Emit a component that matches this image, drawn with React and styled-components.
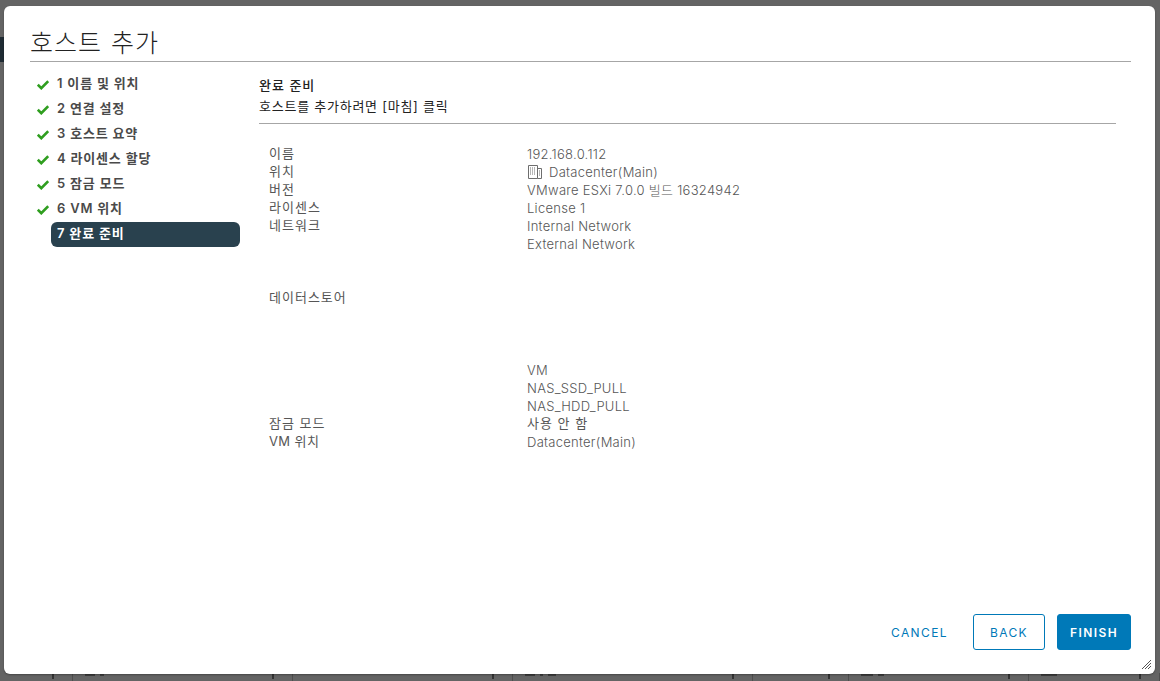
import React from "react";
import styled, { createGlobalStyle } from "styled-components";

const Global = createGlobalStyle`
  html, body { margin: 0; padding: 0; height: 100%; }
  body { overflow: hidden; background: #666; font-family: Inter, "Noto Sans CJK KR", "Liberation Sans", sans-serif; }
  #root { height: 681px; }
`;

const Backdrop = styled.div`
  position: relative;
  width: 1160px;
  height: 681px;
  background: #646464;
  overflow: hidden;
  display: flex;
  flex-direction: column;
  justify-content: space-between;
`;

const TopBand = styled.div`
  height: 62px;
  box-sizing: border-box;
  padding-top: 37px;
  flex: none;
`;

const DarkBlock = styled.div`
  width: 5px;
  height: 25px;
  background: #1f2b33;
`;

const BottomRow = styled.div`
  display: flex;
  height: 8px;
  flex: none;
`;

const BottomCell = styled.div`
  position: relative;
  flex: none;
  width: ${(p) => p.$width}px;
  box-sizing: border-box;
  border-right: 1px solid #4e4e4e;
  display: flex;
  gap: 5px;
  padding: 1px 0 0 ${(p) => p.$pad || 12}px;
`;

const Tick = styled.span`
  position: absolute;
  right: 18px;
  top: 1px;
  width: 2px;
  height: 5px;
  background: #333;
`;

const Stub = styled.span`
  width: ${(p) => p.$w}px;
  height: 2px;
  background: #3d3d3d;
`;

const Modal = styled.section`
  position: absolute;
  left: 4px;
  top: 6px;
  width: 1151px;
  height: 668px;
  background: #fff;
  border-radius: 6px;
  box-shadow: 0 1px 2px rgba(0, 0, 0, 0.3);
  display: flex;
  flex-direction: column;
  padding: 0 24px 24px 26px;
  box-sizing: border-box;
`;

const Header = styled.header`
  height: 55px;
  border-bottom: 1px solid #a6a6a6;
  display: flex;
  align-items: flex-end;
  flex: none;
`;

const Title = styled.h1`
  margin: 0 0 2px;
  font-size: 25px;
  line-height: 32px;
  font-weight: 300;
  letter-spacing: 1px;
  word-spacing: 1px;
  color: #222;
`;

const Body = styled.div`
  flex: 1;
  display: flex;
  min-height: 0;
`;

const Steps = styled.ol`
  list-style: none;
  margin: 0;
  padding: 10px 19px 0 7px;
  width: 229px;
  box-sizing: border-box;
  flex: none;
  display: flex;
  flex-direction: column;
`;

const Step = styled.li`
  display: flex;
  align-items: center;
  height: 25px;
  font-size: 13px;
  font-weight: 600;
`;

const StepIcon = styled.span`
  width: 14px;
  display: flex;
  flex: none;
`;

const StepLabel = styled.span`
  flex: 1;
  height: 25px;
  line-height: 22px;
  padding-left: 6px;
  border-radius: 6px;
  box-sizing: border-box;
  letter-spacing: 0.8px;
  color: ${(p) => (p.$active ? "#fff" : "#4a4a4a")};
  background: ${(p) => (p.$active ? "#29414e" : "transparent")};
`;

const Content = styled.main`
  flex: 1;
  padding-right: 15px;
  min-width: 0;
`;

const Intro = styled.div`
  padding-top: 13px;
  height: 48px;
  border-bottom: 1px solid #a6a6a6;
`;

const Heading = styled.h2`
  margin: 0;
  font-size: 13px;
  line-height: 21px;
  font-weight: 500;
  letter-spacing: 1px;
  color: #222;
`;

const Sub = styled.p`
  margin: 0;
  font-size: 13px;
  line-height: 21px;
  font-weight: 400;
  letter-spacing: 0.75px;
  color: #222;
`;

const Summary = styled.div`
  padding: 20px 0 0 10px;
`;

const Row = styled.div`
  display: grid;
  grid-template-columns: 258px 1fr;
  font-size: 13px;
  line-height: 18px;
  font-weight: 300;
  color: #565656;
  margin-top: ${(p) => p.$gap || 0}px;
`;

const Label = styled.span`
  letter-spacing: ${(p) => (p.$mixed ? 0.4 : 1)}px;
  font-weight: 400;
`;

const Value = styled.div`
  display: flex;
  flex-direction: column;
  letter-spacing: ${(p) => (p.$ko ? 1 : 0.28)}px;
  font-weight: ${(p) => (p.$ko ? 400 : 300)};
  position: relative;
  top: ${(p) => (p.$ko ? 0 : 1)}px;
`;

const IconLine = styled.span`
  display: flex;
  align-items: center;
  gap: 6px;
`;

const Footer = styled.footer`
  flex: none;
  display: flex;
  justify-content: flex-end;
  align-items: center;
  gap: 12px;
`;

const Button = styled.button`
  height: 36px;
  box-sizing: border-box;
  padding: 0 12px;
  min-width: ${(p) => p.$min || 72}px;
  font-family: inherit;
  font-size: 12px;
  font-weight: ${(p) => (p.$variant === "primary" ? 600 : 400)};
  letter-spacing: 1.4px;
  text-transform: uppercase;
  border-radius: 3px;
  border: 1px solid ${(p) => (p.$variant === "link" ? "transparent" : "#0079b8")};
  background: ${(p) => (p.$variant === "primary" ? "#0079b8" : "#fff")};
  color: ${(p) => (p.$variant === "primary" ? "#fff" : "#0079b8")};
`;

const Resize = styled.svg`
  position: absolute;
  right: 4px;
  bottom: 5px;
`;

const Check = () => (
  <svg width="12" height="10" viewBox="0 0 12 10">
    <path d="M0.8 4.6 L4.3 8.2 L11.2 1.2" fill="none" stroke="#2f9e1f" strokeWidth="2.6" />
  </svg>
);

const Building = () => (
  <svg width="16" height="14" viewBox="0 0 16 14" fill="none" stroke="#6e6e6e" strokeWidth="1">
    <path d="M1.5 13.5V0.5H10.5V13.5H1.5Z" />
    <path d="M10.5 3.5H14.5V13.5H10.5" />
    <path d="M3 3H9M3 5H9M3 7H9M3 9H9M12 6H13.5M12 8H13.5M12 10H13.5" strokeDasharray="1 1" />
  </svg>
);

const steps = ["1 이름 및 위치", "2 연결 설정", "3 호스트 요약", "4 라이센스 할당", "5 잠금 모드", "6 VM 위치"];
const cells = [
  { w: 73, stubs: [] },
  { w: 220, stubs: [10, 4] },
  { w: 220, stubs: [] },
  { w: 240, stubs: [10, 3, 8] },
  { w: 96, stubs: [] },
  { w: 180, stubs: [12, 6] },
  { w: 131, stubs: [16] },
];

export default function App() {
  return (
    <Backdrop>
      <Global />
      <TopBand>
        <DarkBlock />
      </TopBand>
      <BottomRow>
        {cells.map((c, i) => (
          <BottomCell key={i} $width={c.w}>
            {c.stubs.map((s, j) => (
              <Stub key={j} $w={s} />
            ))}
            <Tick />
          </BottomCell>
        ))}
      </BottomRow>
      <Modal>
        <Header>
          <Title>호스트 추가</Title>
        </Header>
        <Body>
          <Steps>
            {steps.map((s) => (
              <Step key={s}>
                <StepIcon>
                  <Check />
                </StepIcon>
                <StepLabel>{s}</StepLabel>
              </Step>
            ))}
            <Step>
              <StepIcon />
              <StepLabel $active>7 완료 준비</StepLabel>
            </Step>
          </Steps>
          <Content>
            <Intro>
              <Heading>완료 준비</Heading>
              <Sub>호스트를 추가하려면 [마침] 클릭</Sub>
            </Intro>
            <Summary>
              <Row><Label>이름</Label><Value>192.168.0.112</Value></Row>
              <Row><Label>위치</Label><Value><IconLine><Building />Datacenter(Main)</IconLine></Value></Row>
              <Row><Label>버전</Label><Value>VMware ESXi 7.0.0 빌드 16324942</Value></Row>
              <Row><Label>라이센스</Label><Value>License 1</Value></Row>
              <Row><Label>네트워크</Label><Value><span>Internal Network</span><span>External Network</span></Value></Row>
              <Row $gap={36}><Label>데이터스토어</Label><Value /></Row>
              <Row $gap={54}><span /><Value><span>VM</span><span>NAS_SSD_PULL</span><span>NAS_HDD_PULL</span></Value></Row>
              <Row><Label>잠금 모드</Label><Value $ko>사용 안 함</Value></Row>
              <Row><Label $mixed>VM 위치</Label><Value>Datacenter(Main)</Value></Row>
            </Summary>
          </Content>
        </Body>
        <Footer>
          <Button $variant="link">Cancel</Button>
          <Button $variant="outline">Back</Button>
          <Button $variant="primary" $min={74}>Finish</Button>
        </Footer>
        <Resize width="9" height="9" viewBox="0 0 9 9" stroke="#555" strokeWidth="1">
          <path d="M0 9L9 0M3 9L9 3M6 9L9 6" />
        </Resize>
      </Modal>
    </Backdrop>
  );
}
